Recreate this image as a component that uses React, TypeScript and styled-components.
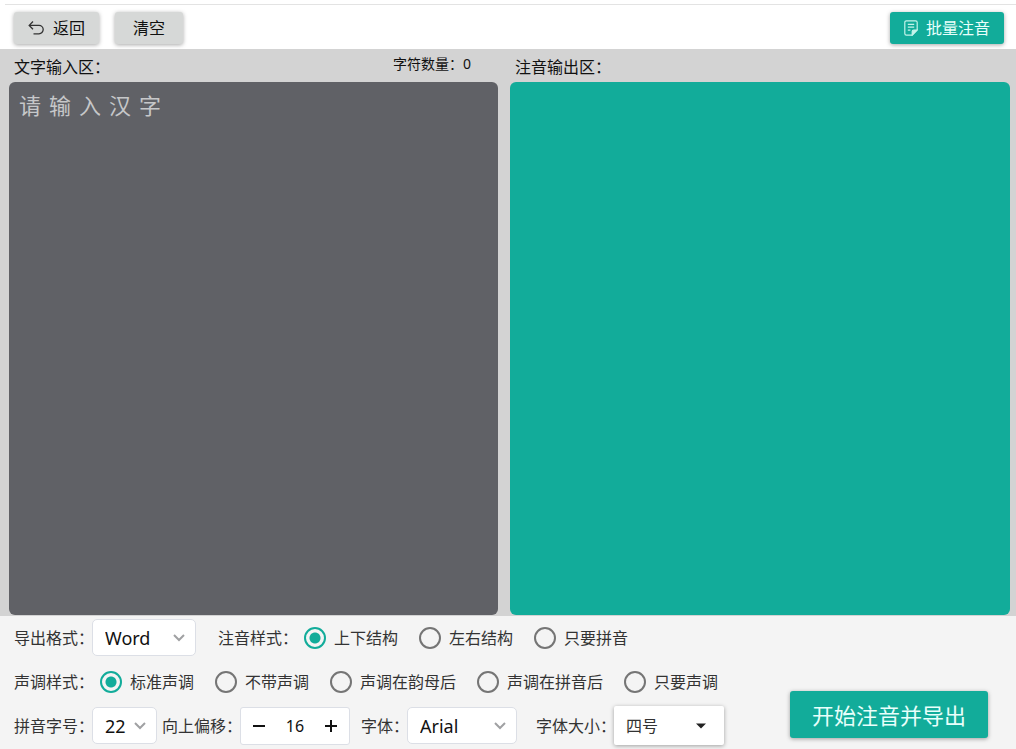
import React, { useState } from "react";
import styled, { createGlobalStyle } from "styled-components";

const teal = "#12ac9a";

const GlobalStyle = createGlobalStyle`
  * { box-sizing: border-box; }
  body {
    margin: 0;
    background: #f4f4f4;
    color: #333;
    font-family: "Noto Sans", "Noto Sans CJK SC", sans-serif;
    font-size: 16px;
    line-height: 24px;
  }
  button, input, select, textarea { font: inherit; color: inherit; margin: 0; }
`;

const Page = styled.div`
  min-height: 100vh;
  display: flex;
  flex-direction: column;
`;

const Toolbar = styled.header`
  background: #fff;
  padding: 4px 0 5px 5px;
`;

const ToolbarRow = styled.div`
  display: flex;
  gap: 16px;
  border-top: 1px solid #e3e3e3;
  padding: 7px 12px 0 9px;
`;

const Button = styled.button<{ $primary?: boolean; $pad?: number }>`
  display: flex;
  align-items: center;
  justify-content: center;
  gap: 8px;
  height: 32px;
  padding: 0 ${(p) => p.$pad ?? 18}px;
  border: 0;
  border-radius: 3px;
  background: ${(p) => (p.$primary ? teal : "#d6d8d7")};
  color: ${(p) => (p.$primary ? "#e8fffb" : "#111")};
  box-shadow: 0 1px 4px rgba(0, 0, 0, 0.35);
  white-space: nowrap;
  cursor: pointer;
`;

const Spacer = styled.div`
  flex: 1;
`;

const Workspace = styled.main`
  flex: 1;
  display: grid;
  grid-template-columns: 489fr 500fr;
  gap: 12px;
  padding: 0 6px 1px 9px;
  background: #d3d3d3;
`;

const Pane = styled.section`
  display: flex;
  flex-direction: column;
  min-width: 0;
`;

const PaneHead = styled.div`
  display: flex;
  justify-content: space-between;
  height: 33px;
  padding: 6px 27px 0 5px;
  color: #111;
`;

const Count = styled.span`
  font-size: 14px;
  line-height: 18px;
`;

const TextArea = styled.textarea<{ $output?: boolean }>`
  flex: 1;
  width: 100%;
  min-height: 240px;
  padding: 8px 10px;
  border: 0;
  border-radius: 6px;
  outline: 0;
  resize: none;
  background: ${(p) => (p.$output ? teal : "#606166")};
  color: #fff;
  font-size: 22px;
  line-height: 30px;
  letter-spacing: 8px;
  &::placeholder { color: #c6c7c9; opacity: 1; }
`;

const Footer = styled.footer`
  display: flex;
  justify-content: space-between;
  align-items: flex-end;
  padding: 3px 28px 5px 14px;
`;

const Options = styled.div`
  display: flex;
  flex-direction: column;
  gap: 7px;
`;

const Row = styled.div`
  display: flex;
  align-items: center;
  height: 37px;
`;

const Field = styled.div<{ $gap: number }>`
  display: flex;
  align-items: center;
  margin-right: ${(p) => p.$gap}px;
`;

const Label = styled.label<{ $short?: boolean }>`
  width: ${(p) => (p.$short ? 46 : 78)}px;
  white-space: nowrap;
`;

const Group = styled.div`
  display: flex;
  align-items: center;
  gap: 21px;
`;

const GroupName = styled.span`
  width: 65px;
  white-space: nowrap;
`;

const Choice = styled.label`
  display: flex;
  align-items: center;
  gap: 8px;
  white-space: nowrap;
`;

const Radio = styled.input`
  appearance: none;
  width: 22px;
  height: 22px;
  border: 2px solid #757575;
  border-radius: 50%;
  &:checked {
    border-color: ${teal};
    background: radial-gradient(circle, ${teal} 5px, transparent 6px);
  }
`;

const SelectBox = styled.div<{ $width: number; $raised?: boolean }>`
  position: relative;
  width: ${(p) => p.$width}px;
  height: ${(p) => (p.$raised ? 39 : 37)}px;
  border: ${(p) => (p.$raised ? "0" : "1px solid #dcdfe6")};
  border-radius: ${(p) => (p.$raised ? 2 : 5)}px;
  background: #fff;
  box-shadow: ${(p) => (p.$raised ? "0 1px 4px rgba(0, 0, 0, 0.35)" : "none")};
  color: ${(p) => (p.$raised ? "#333" : "#111")};
  font-size: ${(p) => (p.$raised ? 16 : 18)}px;
  svg {
    position: absolute;
    right: ${(p) => (p.$raised ? 17 : 9)}px;
    top: 50%;
    margin-top: -7px;
    pointer-events: none;
  }
`;

const Select = styled.select`
  appearance: none;
  width: 100%;
  height: 100%;
  padding: 0 12px;
  border: 0;
  outline: 0;
  background: transparent;
`;

const Stepper = styled.div`
  display: flex;
  align-items: center;
  width: 110px;
  height: 38px;
  border: 1px solid #dcdfe6;
  border-radius: 3px;
  background: #fff;
  color: #111;
`;

const StepButton = styled.button`
  display: flex;
  align-items: center;
  justify-content: center;
  width: 36px;
  height: 100%;
  padding: 0;
  border: 0;
  background: transparent;
  cursor: pointer;
`;

const StepInput = styled.input`
  flex: 1;
  min-width: 0;
  padding: 0;
  border: 0;
  outline: 0;
  background: transparent;
  text-align: center;
`;

const StartButton = styled(Button)`
  height: 47px;
  margin-bottom: 6px;
  padding: 0 22px;
  font-size: 22px;
`;

const Chevron = () => (
  <svg width="14" height="14" viewBox="0 0 14 14" fill="none" stroke="#a0a1a3" strokeWidth="2">
    <path d="M2 4 7 9 12 4" />
  </svg>
);

const Caret = () => (
  <svg width="12" height="14" viewBox="0 0 12 14" fill="#222">
    <path d="M1 4.5h10L6 9.5z" />
  </svg>
);

const BackIcon = () => (
  <svg width="17" height="17" viewBox="0 0 17 17" fill="none" stroke="#333" strokeWidth="1.3">
    <path d="M5 1.5 1.2 5.4 5 9.3M1.5 5.4H11a4.2 4.2 0 0 1 0 8.4H5.5" />
  </svg>
);

const NoteIcon = () => (
  <svg width="14" height="16" viewBox="0 0 14 16" fill="none" stroke="#c4f3ea" strokeWidth="1.2">
    <path d="M13.2 10V2.4A1.6 1.6 0 0 0 11.6.8H2.4A1.6 1.6 0 0 0 .8 2.4v11.2a1.6 1.6 0 0 0 1.6 1.6h5.8z" />
    <path d="M8.2 15v-3.4A1.6 1.6 0 0 1 9.8 10h3.2z" fill="#c4f3ea" />
    <path d="M3.8 4.3h6.4M3.8 7.2h6.4M3.8 10.1h2.6" />
  </svg>
);

const styles = ["上下结构", "左右结构", "只要拼音"];
const tones = ["标准声调", "不带声调", "声调在韵母后", "声调在拼音后", "只要声调"];

function Radios({ name, title, items }: { name: string; title: string; items: string[] }) {
  const [value, setValue] = useState(items[0]);
  return (
    <Group role="radiogroup" aria-label={title}>
      <GroupName>{title}：</GroupName>
      {items.map((item) => (
        <Choice key={item}>
          <Radio type="radio" name={name} checked={value === item} onChange={() => setValue(item)} />
          {item}
        </Choice>
      ))}
    </Group>
  );
}

export default function App() {
  const [text, setText] = useState("");
  const [offset, setOffset] = useState(16);
  return (
    <Page>
      <GlobalStyle />
      <Toolbar>
        <ToolbarRow>
          <Button $pad={14}>
            <BackIcon />
            返回
          </Button>
          <Button>清空</Button>
          <Spacer />
          <Button $primary $pad={14}>
            <NoteIcon />
            批量注音
          </Button>
        </ToolbarRow>
      </Toolbar>
      <Workspace>
        <Pane>
          <PaneHead>
            <label htmlFor="source">文字输入区：</label>
            <Count>字符数量：{text.length}</Count>
          </PaneHead>
          <TextArea
            id="source"
            placeholder="请输入汉字"
            value={text}
            onChange={(e) => setText(e.target.value)}
          />
        </Pane>
        <Pane>
          <PaneHead>
            <label htmlFor="result">注音输出区：</label>
          </PaneHead>
          <TextArea id="result" $output readOnly />
        </Pane>
      </Workspace>
      <Footer>
        <Options>
          <Row>
            <Field $gap={22}>
              <Label htmlFor="format">导出格式：</Label>
              <SelectBox $width={104}>
                <Select id="format">
                  <option>Word</option>
                </Select>
                <Chevron />
              </SelectBox>
            </Field>
            <Radios name="layout" title="注音样式" items={styles} />
          </Row>
          <Row>
            <Radios name="tone" title="声调样式" items={tones} />
          </Row>
          <Row>
            <Field $gap={5}>
              <Label htmlFor="pinyin-size">拼音字号：</Label>
              <SelectBox $width={65}>
                <Select id="pinyin-size">
                  <option>22</option>
                </Select>
                <Chevron />
              </SelectBox>
            </Field>
            <Field $gap={11}>
              <Label htmlFor="offset">向上偏移：</Label>
              <Stepper>
                <StepButton aria-label="减少" onClick={() => setOffset(offset - 1)}>
                  <svg width="14" height="14" viewBox="0 0 14 14" stroke="#111" strokeWidth="2">
                    <path d="M1 7h12" />
                  </svg>
                </StepButton>
                <StepInput
                  id="offset"
                  value={offset}
                  onChange={(e) => setOffset(Number(e.target.value) || 0)}
                />
                <StepButton aria-label="增加" onClick={() => setOffset(offset + 1)}>
                  <svg width="14" height="14" viewBox="0 0 14 14" stroke="#111" strokeWidth="2">
                    <path d="M1 7h12M7 1v12" />
                  </svg>
                </StepButton>
              </Stepper>
            </Field>
            <Field $gap={19}>
              <Label $short htmlFor="font">字体：</Label>
              <SelectBox $width={110}>
                <Select id="font">
                  <option>Arial</option>
                </Select>
                <Chevron />
              </SelectBox>
            </Field>
            <Field $gap={0}>
              <Label htmlFor="font-size">字体大小：</Label>
              <SelectBox $width={110} $raised>
                <Select id="font-size">
                  <option>四号</option>
                </Select>
                <Caret />
              </SelectBox>
            </Field>
          </Row>
        </Options>
        <StartButton $primary>开始注音并导出</StartButton>
      </Footer>
    </Page>
  );
}
